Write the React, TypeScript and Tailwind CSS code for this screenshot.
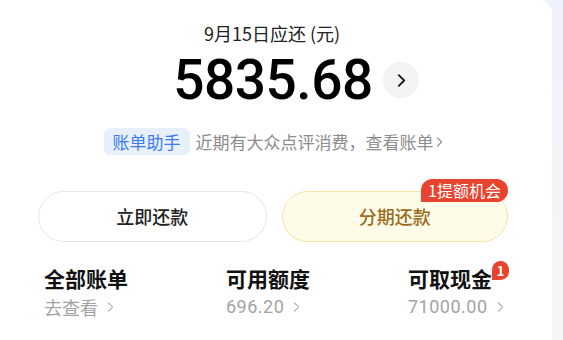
import React from 'react';

const font = { fontFamily: '"Noto Sans CJK SC", "Noto Sans", sans-serif' };

const Chevron = ({ className = '', stroke = '#222', w = 2 }: { className?: string; stroke?: string; w?: number }) => (
  <svg viewBox="0 0 10 16" className={className} fill="none">
    <path d="M2 2l6 6-6 6" stroke={stroke} strokeWidth={w} strokeLinecap="round" strokeLinejoin="round" />
  </svg>
);

const stats = [
  { label: '全部账单', value: '去查看', badge: false },
  { label: '可用额度', value: '696.20', badge: false },
  { label: '可取现金', value: '71000.00', badge: true },
];

export default function App() {
  return (
    <div className="w-[563px] h-[340px] flex bg-gradient-to-b from-[#eef0fb] via-[#f5f3f7] to-[#f5f5f7] overflow-hidden" style={font}>
      <div className="w-[552px] h-full bg-white rounded-tr-[14px] flex flex-col">
        <div className="flex flex-col items-center pt-[19px]">
          <div className="text-[18px] leading-[28px] text-[#222] ml-[-8px]">9月15日应还 (元)</div>
          <div className="flex items-center gap-[10px] mt-[2px] ml-[40px]">
            <span className="text-[55px] leading-[62px] font-medium text-black tracking-[-0.5px]" style={{ fontFamily: 'Roboto, "Liberation Sans", sans-serif' }}>
              5835.68
            </span>
            <div className="w-[36px] h-[36px] rounded-full bg-[#f3f3f3] flex items-center justify-center">
              <Chevron className="w-[9px] h-[15px] ml-[2px]" stroke="#1a1a1a" w={2} />
            </div>
          </div>
          <div className="flex items-center mt-[17px] ml-[-6px]">
            <span className="px-[9px] h-[27px] leading-[27px] rounded-[6px] bg-[#e8f0fe] text-[#3b7cf2] text-[17px]">账单助手</span>
            <span className="ml-[6px] text-[17px] text-[#8c8c8c]">近期有大众点评消费，查看账单</span>
            <Chevron className="w-[7px] h-[12px] ml-[2px]" stroke="#8c8c8c" w={1.6} />
          </div>
        </div>

        <div className="flex gap-[15px] pl-[38px] pr-[44px] mt-[36px]">
          <button className="flex-1 h-[51px] rounded-full border border-[#e6e6e6] bg-white text-[18px] font-medium text-[#222]">立即还款</button>
          <div className="flex-1 relative">
            <button className="w-full h-[51px] rounded-full border border-[#f7e3a6] bg-[#fffbe9] text-[18px] font-medium text-[#9b6d1e]">分期还款</button>
            <span className="absolute right-0 top-[-12px] h-[23px] px-[7px] leading-[23px] text-[16px] text-white bg-[#e8432f] rounded-t-full rounded-br-full rounded-bl-[3px]">1提额机会</span>
          </div>
        </div>

        <div className="grid grid-cols-[182px_182px_182px] pl-[44px] mt-[22px]">
          {stats.map((s) => (
            <div key={s.label} className="flex flex-col">
              <div className="flex items-start">
                <span className="text-[21px] leading-[28px] font-semibold text-[#111]">{s.label}</span>
                {s.badge && (
                  <span className="mt-[-3px] w-[17px] h-[19px] leading-[19px] text-center text-[13px] font-bold text-white bg-[#e8432f] rounded-t-full rounded-br-full rounded-bl-[3px]">1</span>
                )}
              </div>
              <div className="flex items-center mt-[2px]">
                <span
                  className={s.value === '去查看' ? 'text-[18px] leading-[26px] text-[#a3a3a3]' : 'text-[18px] leading-[26px] text-[#a3a3a3] tracking-[0.5px]'}
                  style={s.value === '去查看' ? undefined : { fontFamily: 'Roboto, sans-serif' }}
                >
                  {s.value}
                </span>
                <Chevron className="w-[7px] h-[12px] ml-[9px]" stroke="#a3a3a3" w={1.5} />
              </div>
            </div>
          ))}
        </div>
      </div>
    </div>
  );
}
